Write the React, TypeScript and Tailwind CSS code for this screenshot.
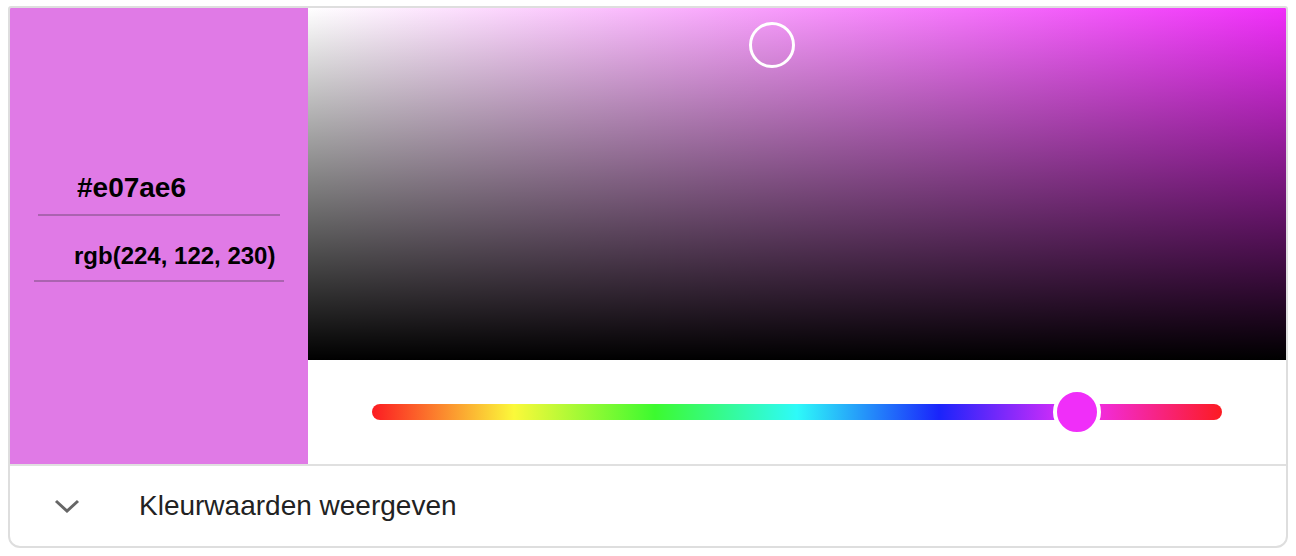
import { useState } from 'react';

const HUE = '#f02ef9';

export default function App() {
  const [hex] = useState('#e07ae6');
  const [rgb] = useState('rgb(224, 122, 230)');

  return (
    <div className="min-h-screen bg-white pt-[6px] px-[8px]" style={{ fontFamily: '"Liberation Sans", Arial, sans-serif' }}>
      <div className="w-[1280px] border-2 border-[#dedede] rounded-b-[12px] rounded-t-[3px] overflow-hidden">
        {/* Picker */}
        <div className="flex h-[456px]">
          {/* Swatch with values */}
          <div className="w-[298px] bg-[#e07ae6] pt-[154px]">
            <div className="ml-[28px] w-[242px] border-b-2 border-[#ab63b0]">
              <input
                readOnly
                value={hex}
                className="w-full h-[52px] pl-[39px] bg-transparent outline-none text-[28px] font-bold text-black"
              />
            </div>
            <div className="ml-[24px] mt-[16px] w-[250px] border-b-2 border-[#ab63b0]">
              <input
                readOnly
                value={rgb}
                className="w-full h-[48px] pl-[40px] bg-transparent outline-none text-[24px] font-bold text-black"
              />
            </div>
          </div>

          {/* Saturation / value + hue */}
          <div className="flex-1 flex flex-col">
            <div className="relative h-[352px] bg-[linear-gradient(to_top,#000,transparent),linear-gradient(to_right,#fff,#f02ef9)]">
              <div className="absolute left-[441px] top-[14px] w-[46px] h-[46px] rounded-full border-[3px] border-white" />
            </div>
            <div className="flex-1 px-[64px] flex items-center">
              <div className="relative w-full h-[16px] rounded-full bg-[linear-gradient(to_right,#fc1b22,#fbf93a_16.7%,#3cfa2f_33.3%,#2efaf9_50%,#1a24fb_66.7%,#f02ef9_83.3%,#fc1b22)]">
                <div
                  className="absolute top-1/2 -translate-y-1/2 -translate-x-1/2 w-[48px] h-[48px] rounded-full border-4 border-white"
                  style={{ left: '82.9%', backgroundColor: HUE }}
                />
              </div>
            </div>
          </div>
        </div>

        {/* Toggle row */}
        <div className="h-[82px] border-t-2 border-[#e0e0e0] flex items-center">
          <svg width="26" height="14" viewBox="0 0 26 14" className="ml-[44px]">
            <polyline points="2,2 13,12 24,2" fill="none" stroke="#666" strokeWidth="3" />
          </svg>
          <span className="ml-[59px] text-[28px] text-[#222]">Kleurwaarden weergeven</span>
        </div>
      </div>
    </div>
  );
}
